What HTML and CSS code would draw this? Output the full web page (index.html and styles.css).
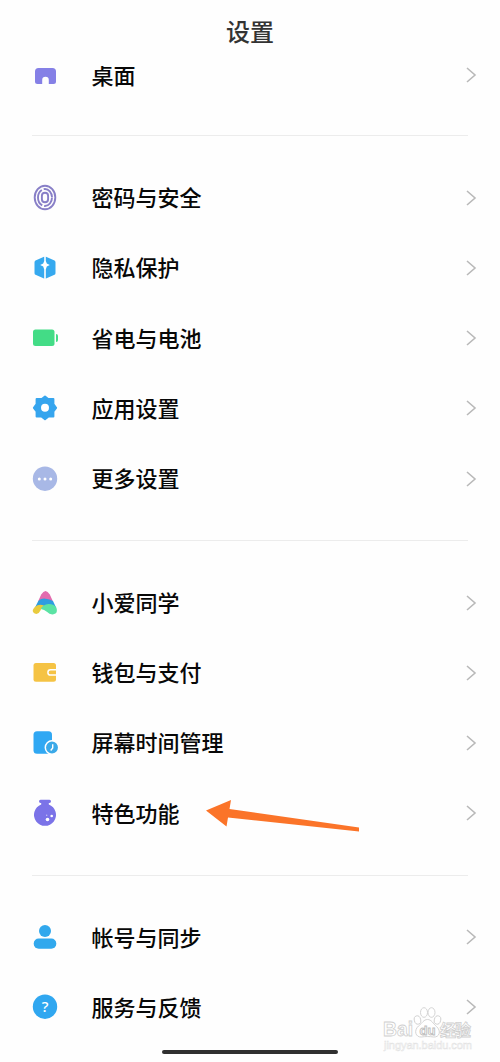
FILE: index.html
```html
<!DOCTYPE html>
<html lang="zh-CN">
<head>
<meta charset="utf-8">
<title>设置</title>
<link rel="stylesheet" href="styles.css">
</head>
<body>
<div class="screen">
  <header class="header"><h1>设置</h1></header>
  <main class="list">
    <section class="group first">
      <div class="row"><svg class="icon" viewBox="0 0 28 28"><path fill="#8580e6" d="M7 7h14.500q3.500 0 3.500 3.500v10q0 2.500-2.500 2.500h-4.700v-4a3.300 3.300 0 0 0-6.600 0v4H6.500q-2.500 0-2.500-2.500v-10Q4 7 7.500 7z"/></svg><span class="label">桌面</span><svg class="chevron" viewBox="0 0 12 18"><path d="M2 2l8 7-8 7"/></svg></div>
    </section>
    <section class="group">
      <div class="row"><svg class="icon" viewBox="0 0 28 28"><g fill="none" stroke="#887fc7" stroke-width="1.900"><ellipse cx="14" cy="13.500" rx="10.300" ry="11.800"/><ellipse cx="14" cy="13.500" rx="7" ry="8.500" stroke-dasharray="13 2 18 2"/><rect x="10.900" y="8.700" width="6.200" height="9.600" rx="3.100"/></g></svg><span class="label">密码与安全</span><svg class="chevron" viewBox="0 0 12 18"><path d="M2 2l8 7-8 7"/></svg></div>
      <div class="row"><svg class="icon" viewBox="0 0 28 28"><path fill="#36a9ef" d="M13 2.800Q14 2.300 15 2.800l8.500 3.800q1 .6 1 1.800v10.500q0 1.300-1 1.900L15 24.500q-1 .5-2 0l-8.500-3.700q-1-.6-1-1.900V8.400q0-1.200 1-1.800z"/><path fill="#fff" d="M13.200 2h1.600v5l1 2.500 3 1.500-3 1.500-1 3V25h-1.600v-9.500l-1-3-3-1.500 3-1.500 1-2.500z"/></svg><span class="label">隐私保护</span><svg class="chevron" viewBox="0 0 12 18"><path d="M2 2l8 7-8 7"/></svg></div>
      <div class="row"><svg class="icon" viewBox="0 0 28 28"><rect x="2" y="5.500" width="21.500" height="16.500" rx="2.500" fill="#43dc86"/><path fill="#43dc86" d="M25 10q2 0 2 2v4q0 2-2 2z"/></svg><span class="label">省电与电池</span><svg class="chevron" viewBox="0 0 12 18"><path d="M2 2l8 7-8 7"/></svg></div>
      <div class="row"><svg class="icon" viewBox="0 0 28 28"><path fill="#36a5ee" stroke="#36a5ee" stroke-width="2" stroke-linejoin="round" d="M14 2.500l3.200 2.500h5.200v5.200l2.700 3.600-2.700 3.600v5.200h-5.200L14 25.100l-3.200-2.500H5.600v-5.200l-2.700-3.600 2.700-3.600V5h5.200z"/><circle cx="14" cy="13.800" r="4" fill="#fff"/></svg><span class="label">应用设置</span><svg class="chevron" viewBox="0 0 12 18"><path d="M2 2l8 7-8 7"/></svg></div>
      <div class="row"><svg class="icon" viewBox="0 0 28 28"><circle cx="14" cy="13.700" r="12.200" fill="#a8b8e6"/><g fill="#fff"><circle cx="8.300" cy="14" r="1.500"/><circle cx="14" cy="14" r="1.500"/><circle cx="19.700" cy="14" r="1.500"/></g></svg><span class="label">更多设置</span><svg class="chevron" viewBox="0 0 12 18"><path d="M2 2l8 7-8 7"/></svg></div>
    </section>
    <section class="group">
      <div class="row"><svg class="icon" viewBox="0 0 28 28"><path fill="#e36cae" d="M7 12.500l3.200-7q4.300-7 8.600 0l3.200 7z"/><path fill="#2e9de0" d="M4 18.500L7.300 12q3-2.800 7.200-2.300T22 12l3.300 7-11 .5z"/><path fill="#e9cb3e" d="M3.800 18q4-3.500 9.200-1.500-2.500 2-3.700 5.200-2 4.300-5.600 2.800-3.200-2-1.200-4.700z"/><path fill="#5be3a4" d="M9.800 20q2.200-4.500 7.700-5 6 0 8 4 1.800 5.500-3 6.300-4 .5-6.300-2.300-3-2.700-6.400-3z"/></svg><span class="label">小爱同学</span><svg class="chevron" viewBox="0 0 12 18"><path d="M2 2l8 7-8 7"/></svg></div>
      <div class="row"><svg class="icon" viewBox="0 0 28 28"><rect x="2.500" y="4" width="22.500" height="18.700" rx="2.500" fill="#f5c344"/><path d="M26 10.800h-6.500a2.600 2.600 0 0 0 0 5.200H26" fill="#f5c344" stroke="#fff" stroke-width="1.500"/><path fill="#fefefe" d="M25 9h3v9h-3z"/></svg><span class="label">钱包与支付</span><svg class="chevron" viewBox="0 0 12 18"><path d="M2 2l8 7-8 7"/></svg></div>
      <div class="row"><svg class="icon" viewBox="0 0 28 28"><rect x="2.500" y="2.200" width="18.500" height="22.500" rx="3.500" fill="#30a8f3"/><circle cx="21" cy="18.500" r="6.700" fill="#3ba9e8" stroke="#fff" stroke-width="1.500"/><path d="M21.700 15.300v3.700l-2 2.500" fill="none" stroke="#fff" stroke-width="1.400"/></svg><span class="label">屏幕时间管理</span><svg class="chevron" viewBox="0 0 12 18"><path d="M2 2l8 7-8 7"/></svg></div>
      <div class="row"><svg class="icon" viewBox="0 0 28 28"><path fill="#7b73e8" d="M9.500.8h9q1.500 0 1.500 1.500T18.500 4h-.7v1.500A11 11 0 1 1 10.200 5.500V4h-.7Q8 3.800 8 2.300T9.500.8z"/><g fill="#fff"><circle cx="16.500" cy="20.500" r="1.800"/><circle cx="20.700" cy="17" r="1.300"/><circle cx="15.700" cy="16.200" r=".7" opacity=".6"/></g></svg><span class="label">特色功能</span><svg class="chevron" viewBox="0 0 12 18"><path d="M2 2l8 7-8 7"/></svg></div>
    </section>
    <section class="group">
      <div class="row"><svg class="icon" viewBox="0 0 28 28"><circle cx="14" cy="8" r="6" fill="#31a8ed"/><rect x="2.700" y="15.500" width="22.600" height="10.200" rx="5" fill="#31a8ed"/></svg><span class="label">帐号与同步</span><svg class="chevron" viewBox="0 0 12 18"><path d="M2 2l8 7-8 7"/></svg></div>
      <div class="row"><svg class="icon" viewBox="0 0 28 28"><circle cx="14" cy="13.700" r="12.200" fill="#30a7f0"/><text x="14" y="19" class="question">?</text></svg><span class="label">服务与反馈</span><svg class="chevron" viewBox="0 0 12 18"><path d="M2 2l8 7-8 7"/></svg></div>
    </section>
  </main>
  <svg class="pointer" viewBox="0 0 156 34"><path fill="#fb7429" d="M1 12.500L26 2l-1.500 9L154 29.500v4L23 19.500l-1.500 9z"/></svg>
  <svg class="watermark" viewBox="0 0 100 52">
    <g class="wm-text"><text x="3" y="34" class="wm-brand" textLength="30" lengthAdjust="spacingAndGlyphs">Bai</text><text x="60" y="33.500" class="wm-cn" textLength="31">经验</text><text x="4" y="46.500" class="wm-url" textLength="88">jingyan.baidu.com</text></g>
    <g class="paw"><ellipse cx="37.500" cy="18" rx="3.200" ry="4.200" transform="rotate(-15 37.500 18)"/><ellipse cx="44" cy="10.500" rx="3.500" ry="4.800"/><ellipse cx="51.500" cy="10.500" rx="3.500" ry="4.800"/><ellipse cx="57.500" cy="18" rx="3.200" ry="4.200" transform="rotate(15 57.500 18)"/><path d="M47.500 17.500c4 0 5.500 4 9 7 5 4.500 3 11-3 10.500-4-.6-8-.6-12 0-6 .5-8-6.500-3-11 4-3 5-6.500 9-6.500z"/></g>
    <text x="39.500" y="32.500" class="wm-du" textLength="16" lengthAdjust="spacingAndGlyphs">du</text>
  </svg>
  <div class="home-bar"></div>
</div>
</body>
</html>
```
FILE: styles.css
```css
* { box-sizing: border-box; }
body { margin: 0; background: #fefefe; font-family: "Noto Sans CJK SC", "Noto Sans", sans-serif; }
.screen { position: relative; width: 500px; height: 1062px; overflow: hidden; }
.header { height: 66px; display: flex; justify-content: center; padding-top: 13px; }
.header h1 { margin: 0; font-size: 24px; line-height: 36px; font-weight: 500; color: #333; }
.list { height: 996px; overflow: hidden; }
.group + .group { margin-top: 26.300px; padding-top: 27.600px; background: linear-gradient(#ececec, #ececec) 32px 0 / 436px 1px no-repeat; }
.group.first { margin-top: -26.300px; }
.group.first + .group { margin-top: 25.200px; }
.group.first .label { padding-bottom: 2px; }
.row { height: 70.200px; display: flex; align-items: center; padding: 0 23px 0 31px; }
.icon { width: 28px; height: 28px; flex: none; }
.label { flex: 1; margin-left: 32.500px; padding-bottom: 3px; font-size: 22px; line-height: 32px; font-weight: 500; color: #080808; white-space: nowrap; }
.chevron { width: 12px; height: 18px; flex: none; fill: none; stroke: #b9b9b9; stroke-width: 1.600; }
.question { font: 500 15px "Noto Sans", sans-serif; fill: #fff; text-anchor: middle; }
.pointer { position: absolute; left: 205px; top: 798px; width: 156px; height: 34px; }
.watermark { position: absolute; left: 380px; top: 1002px; width: 100px; height: 52px; }
.wm-text { fill: #fff; stroke: #cfcfcf; stroke-width: .8; }
.wm-brand { font: bold 20px "Liberation Sans", sans-serif; }
.wm-cn { font: bold 16px "Noto Sans CJK SC", sans-serif; }
.wm-url { font: 11px "Liberation Sans", sans-serif; stroke: #e2e2e2; stroke-width: .5; }
.paw { fill: #fff; stroke: #cfcfcf; stroke-width: .9; }
.wm-du { font: bold 13px "Liberation Sans", sans-serif; fill: #fff; stroke: #c0c0c0; stroke-width: .9; }
.home-bar { position: absolute; left: 162px; top: 1050px; width: 176px; height: 4px; border-radius: 2px; background: #303030; }
```
